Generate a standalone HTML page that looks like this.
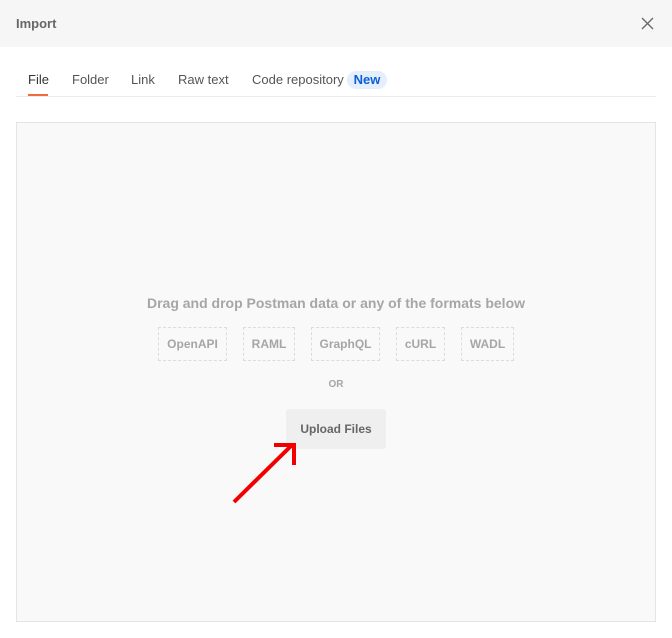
<!DOCTYPE html>
<html><head><style>
*{margin:0;padding:0;box-sizing:border-box}
body{width:672px;height:638px;background:#fff;font-family:"Liberation Sans",sans-serif;position:relative;overflow:hidden}
.hdr{position:absolute;left:0;top:0;width:672px;height:47px;background:#f6f6f6}
.hdr span{position:absolute;left:16px;top:16px;font-size:13px;color:#666;font-weight:bold}
.tab{position:absolute;top:72px;font-size:13px;color:#555}
.ul{position:absolute;left:28px;top:94px;width:20px;height:2px;background:#f26b3a}
.div{position:absolute;left:16px;top:96px;width:640px;height:1px;background:#ececec}
.new{position:absolute;left:347px;top:71px;width:40px;height:18px;border-radius:9px;background:#e4eefc;color:#0b5fd6;font-size:13px;font-weight:bold;text-align:center;line-height:18px}
.drop{position:absolute;left:16px;top:122px;width:640px;height:500px;background:#f9f9f9;border:1px solid #e4e4e4}
.t{position:absolute;font-weight:bold;color:#a6a6a6}
.fb{position:absolute;top:327px;height:34px;border:1px dashed #dcdcdc;font-size:12px;font-weight:bold;color:#a6a6a6;text-align:center;line-height:32px}
.btn{position:absolute;left:286px;top:409px;width:100px;height:40px;background:#efefef;border-radius:3px;font-size:12px;font-weight:bold;color:#666;text-align:center;line-height:40px}
</style></head><body>
<div class="hdr"><span>Import</span>
<svg style="position:absolute;left:641px;top:17px" width="13" height="13" viewBox="0 0 13 13"><path d="M1 1L12 12M12 1L1 12" stroke="#666" stroke-width="1.3"/></svg></div>
<div class="tab" style="left:28px;color:#333">File</div>
<div class="tab" style="left:72px">Folder</div>
<div class="tab" style="left:131px">Link</div>
<div class="tab" style="left:178px">Raw text</div>
<div class="tab" style="left:252px">Code repository</div>
<div class="new">New</div>
<div class="ul"></div>
<div class="div"></div>
<div class="drop"></div>
<div class="t" style="left:0;width:672px;text-align:center;top:295px;font-size:14px">Drag and drop Postman data or any of the formats below</div>
<div class="fb" style="left:158px;width:69px">OpenAPI</div>
<div class="fb" style="left:243px;width:52px">RAML</div>
<div class="fb" style="left:311px;width:69px">GraphQL</div>
<div class="fb" style="left:396px;width:49px">cURL</div>
<div class="fb" style="left:461px;width:53px">WADL</div>
<div class="t" style="left:326px;top:379px;font-size:10px;width:20px;text-align:center">OR</div>
<div class="btn">Upload Files</div>
<svg style="position:absolute;left:0;top:0" width="672" height="638"><path d="M234 502L292 445" stroke="#f20000" stroke-width="4"/><path d="M274 445H294V465" stroke="#f20000" stroke-width="4" fill="none"/></svg>
</body></html>
